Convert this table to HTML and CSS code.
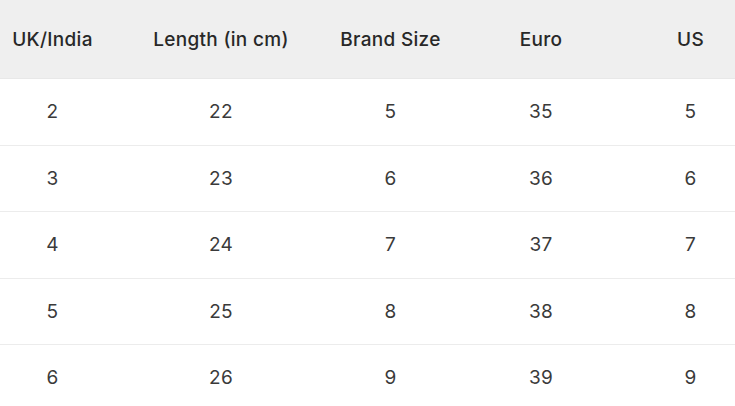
FILE: index.html
```html
<!DOCTYPE html>
<html lang="en">
<head>
<meta charset="utf-8">
<title>Size Chart</title>
<link rel="stylesheet" href="styles.css">
</head>
<body>
<table class="size-table">
  <colgroup>
    <col class="c1"><col class="c2"><col class="c3"><col class="c4"><col class="c5">
  </colgroup>
  <thead>
    <tr><th>UK/India</th><th>Length (in cm)</th><th>Brand Size</th><th>Euro</th><th class="last">US</th></tr>
  </thead>
  <tbody>
    <tr><td>2</td><td>22</td><td>5</td><td>35</td><td class="last">5</td></tr>
    <tr><td>3</td><td>23</td><td>6</td><td>36</td><td class="last">6</td></tr>
    <tr><td>4</td><td>24</td><td>7</td><td>37</td><td class="last">7</td></tr>
    <tr><td>5</td><td>25</td><td>8</td><td>38</td><td class="last">8</td></tr>
    <tr><td>6</td><td>26</td><td>9</td><td>39</td><td class="last">9</td></tr>
  </tbody>
</table>
</body>
</html>
```
FILE: styles.css
```css
html, body {
  margin: 0;
  padding: 0;
  background: #ffffff;
  overflow: hidden;
}
body {
  font-family: "Inter", sans-serif;
}
.size-table {
  width: 735px;
  table-layout: fixed;
  border-collapse: collapse;
  border-spacing: 0;
}
.c1 { width: 105px; }
.c2 { width: 232px; }
.c3 { width: 107px; }
.c4 { width: 194px; }
.c5 { width: 97px; }
.size-table th {
  height: 78px;
  padding: 0;
  background: #efefef;
  color: #282828;
  font-size: 19px;
  font-weight: 500;
  letter-spacing: 0.3px;
  text-align: center;
  vertical-align: middle;
  border-bottom: 1px solid #e8e8e8;
}
.size-table td {
  height: 65.5px;
  padding: 0;
  color: #3a3a3a;
  font-size: 19px;
  font-weight: 400;
  letter-spacing: 0.3px;
  text-align: center;
  vertical-align: middle;
  border-bottom: 1px solid #ececec;
}
.size-table .last {
  padding-left: 8px;
}
```
